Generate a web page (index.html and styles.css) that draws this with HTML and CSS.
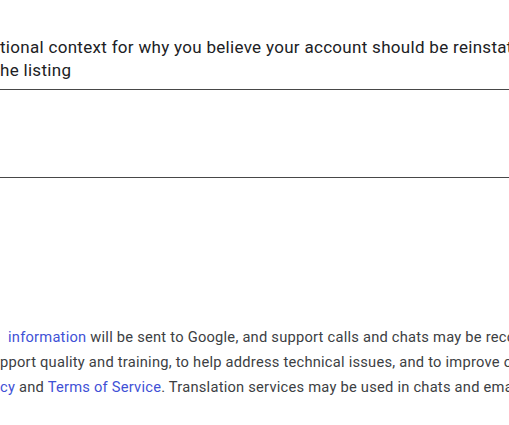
FILE: index.html
```html
<!DOCTYPE html>
<html lang="en">
<head>
    <meta charset="UTF-8">
    <meta name="viewport" content="width=device-width, initial-scale=1.0">
    <title>Reinstatement request</title>
    <link rel="stylesheet" href="styles.css">
</head>
<body>

    <div class="page">
        <div class="field">
            <label class="field-label" for="context">
                <span class="line">tional context for why you believe your account should be reinstated, and include</span>
                <span class="line">he listing</span>
            </label>
            <input type="text" id="context" class="field-input">
        </div>

        <div class="field">
            <textarea id="details" class="field-area" rows="3"></textarea>
        </div>

        <p class="disclaimer">
            <span class="line first"><a href="#">information</a> will be sent to Google, and support calls and chats may be recorded.</span>
            <span class="line">pport quality and training, to help address technical issues, and to improve our products</span>
            <span class="line"><a href="#">cy</a> and <a href="#">Terms of Service</a>. Translation services may be used in chats and email.</span>
        </p>
    </div>

</body>
</html>
```

FILE: styles.css
```css
body {
    margin: 0;
    font-family: Roboto, Arial, sans-serif;
    color: #202124;
    background: #fff;
    overflow: hidden;
}
.page {
    width: 509px;
    overflow: hidden;
    padding-top: 36px;
}
.line {
    display: block;
    white-space: nowrap;
}
.field-label {
    display: block;
    font-size: 17px;
    letter-spacing: 0.3px;
    line-height: 23px;
}
.field-input {
    display: block;
    width: 100%;
    height: 7px;
    margin: 0;
    padding: 0;
    border: none;
    border-bottom: 1px solid #474747;
    outline: none;
    font: inherit;
}
.field-area {
    display: block;
    width: 100%;
    height: 87px;
    margin: 0;
    padding: 0;
    border: none;
    border-bottom: 1px solid #474747;
    outline: none;
    resize: none;
    font: inherit;
}
.disclaimer {
    margin: 147px 0 0;
    font-size: 14.7px;
    letter-spacing: 0.23px;
    line-height: 25px;
    color: #3c4043;
}
.disclaimer .first {
    padding-left: 8px;
}
.disclaimer a {
    color: #3f51d6;
    text-decoration: none;
}
```
